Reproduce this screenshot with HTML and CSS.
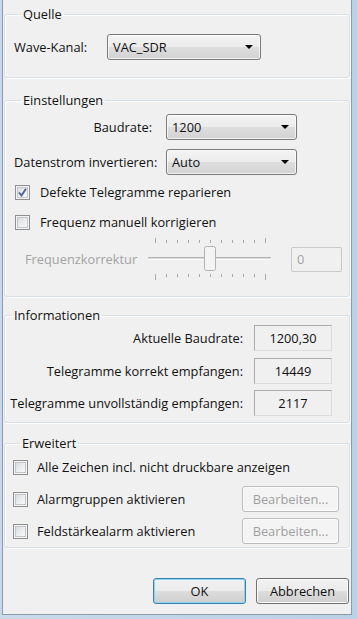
FILE: index.html
```html
<!DOCTYPE html>
<html lang="de">
<head>
    <meta charset="UTF-8">
    <title>Einstellungen</title>
    <link rel="stylesheet" href="styles.css">
</head>
<body>
<div class="window">
  <div class="client">

    <fieldset class="group group-source">
      <legend>Quelle</legend>
      <div class="source-row">
        <label class="source-label">Wave-Kanal:</label>
        <div class="combo combo-source">VAC_SDR<span class="arrow"></span></div>
      </div>
    </fieldset>

    <fieldset class="group group-settings">
      <legend>Einstellungen</legend>
      <div class="settings-grid">
        <label class="right">Baudrate:</label>
        <div class="combo">1200<span class="arrow"></span></div>
        <label class="right">Datenstrom invertieren:</label>
        <div class="combo">Auto<span class="arrow"></span></div>
      </div>
      <div class="check-row first">
        <span class="check">
          <svg width="9" height="9" viewBox="0 0 9 9"><path d="M1 4.5 L3.5 7.5 L8 0.8" fill="none" stroke="#4a5c9a" stroke-width="1.8"/></svg>
        </span>
        <span>Defekte Telegramme reparieren</span>
      </div>
      <div class="check-row second">
        <span class="check"></span>
        <span>Frequenz manuell korrigieren</span>
      </div>
      <div class="slider-row">
        <span class="slider-label">Frequenzkorrektur</span>
        <svg class="slider" width="124" height="42" viewBox="0 0 124 42">
          <g stroke="#a9a9a9" stroke-width="1">
            <line x1="7.5" y1="0" x2="7.5" y2="5"/>
            <line x1="18.5" y1="2" x2="18.5" y2="5"/>
            <line x1="29.5" y1="2" x2="29.5" y2="5"/>
            <line x1="40.5" y1="2" x2="40.5" y2="5"/>
            <line x1="51.5" y1="2" x2="51.5" y2="5"/>
            <line x1="62.5" y1="2" x2="62.5" y2="5"/>
            <line x1="73.5" y1="2" x2="73.5" y2="5"/>
            <line x1="84.5" y1="2" x2="84.5" y2="5"/>
            <line x1="95.5" y1="2" x2="95.5" y2="5"/>
            <line x1="106.5" y1="2" x2="106.5" y2="5"/>
            <line x1="117.5" y1="0" x2="117.5" y2="5"/>
            <line x1="7.5" y1="36" x2="7.5" y2="42"/>
            <line x1="18.5" y1="36" x2="18.5" y2="39"/>
            <line x1="29.5" y1="36" x2="29.5" y2="39"/>
            <line x1="40.5" y1="36" x2="40.5" y2="39"/>
            <line x1="51.5" y1="36" x2="51.5" y2="39"/>
            <line x1="62.5" y1="36" x2="62.5" y2="39"/>
            <line x1="73.5" y1="36" x2="73.5" y2="39"/>
            <line x1="84.5" y1="36" x2="84.5" y2="39"/>
            <line x1="95.5" y1="36" x2="95.5" y2="39"/>
            <line x1="106.5" y1="36" x2="106.5" y2="39"/>
            <line x1="117.5" y1="36" x2="117.5" y2="42"/>
          </g>
          <line x1="0" y1="19.5" x2="123" y2="19.5" stroke="#b4b4b4"/>
          <line x1="0" y1="20.5" x2="123" y2="20.5" stroke="#dadada"/>
          <line x1="0" y1="21.5" x2="123" y2="21.5" stroke="#ffffff"/>
          <rect x="56.5" y="8.5" width="11" height="24" rx="2" fill="#f4f4f4" stroke="#b2b2b2"/>
        </svg>
        <div class="edit-box">0</div>
      </div>
    </fieldset>

    <fieldset class="group group-info">
      <legend>Informationen</legend>
      <div class="info-grid">
        <label class="right">Aktuelle Baudrate:</label>
        <div class="value">1200,30</div>
        <label class="right">Telegramme korrekt empfangen:</label>
        <div class="value">14449</div>
        <label class="right">Telegramme unvollständig empfangen:</label>
        <div class="value">2117</div>
      </div>
    </fieldset>

    <fieldset class="group group-extra">
      <legend>Erweitert</legend>
      <div class="extra-row">
        <div class="check-line"><span class="check"></span><span>Alle Zeichen incl. nicht druckbare anzeigen</span></div>
      </div>
      <div class="extra-row tall">
        <div class="check-line"><span class="check"></span><span>Alarmgruppen aktivieren</span></div>
        <button class="btn btn-edit" disabled>Bearbeiten...</button>
      </div>
      <div class="extra-row tall last">
        <div class="check-line"><span class="check"></span><span>Feldstärkealarm aktivieren</span></div>
        <button class="btn btn-edit" disabled>Bearbeiten...</button>
      </div>
    </fieldset>

    <div class="actions">
      <button class="btn btn-default">OK</button>
      <button class="btn">Abbrechen</button>
    </div>

  </div>
</div>
</body>
</html>
```

FILE: styles.css
```css
* {
  box-sizing: border-box;
}

body {
  margin: 0;
  background: #c4d6eb;
  font-family: "Open Sans", "Liberation Sans", sans-serif;
  font-size: 12.8px;
  color: #111;
}

.window {
  width: 357px;
  height: 619px;
  display: flex;
  padding: 0 5px 4px 2px;
  background: linear-gradient(90deg, #c9d9ea, #bcd0e6);
}

.client {
  flex: 1;
  display: flex;
  flex-direction: column;
  background: #f0f0f0;
  border: 1px solid #8c9aab;
  border-top: none;
  padding: 0 1px;
}

/* group boxes */
.group {
  margin: 0;
  padding: 0;
  min-width: 0;
  border: 1px solid #d5dfe5;
  border-radius: 3px;
  box-shadow: inset 1px 1px 0 #fff, 1px 1px 0 #fff;
}

.group legend {
  margin-left: 7px;
  padding: 0 2px;
  line-height: 16px;
}

.group-source { margin-top: 6px; padding: 12px 0 17px 9px; }
.group-settings { margin-top: 14px; padding: 6px 0 16px 9px; }
.group-info { margin-top: 10px; padding: 2px 0 6px 0; }
.group-extra { margin-top: 12px; padding: 8px 10px 3px 8px; }

.right {
  text-align: right;
  white-space: nowrap;
}

/* combo boxes */
.combo {
  position: relative;
  height: 26px;
  line-height: 24px;
  padding-left: 5px;
  border: 1px solid #7a7a7a;
  border-radius: 3px;
  background: linear-gradient(#f3f3f3 0%, #ececec 50%, #dedede 51%, #d2d2d2 100%);
  box-shadow: inset 0 0 0 1px rgba(255,255,255,0.7);
}

.combo .arrow {
  position: absolute;
  right: 7px;
  top: 10px;
  width: 0;
  height: 0;
  border-left: 4px solid transparent;
  border-right: 4px solid transparent;
  border-top: 4px solid #000;
}

.source-row {
  display: flex;
  align-items: center;
}

.source-label {
  width: 93px;
  white-space: nowrap;
}

.combo-source {
  width: 154px;
}

.settings-grid {
  display: grid;
  grid-template-columns: 138px 131px;
  column-gap: 14px;
  row-gap: 9px;
  align-items: center;
}

/* check boxes */
.check {
  width: 15px;
  height: 15px;
  flex: none;
  display: flex;
  align-items: center;
  justify-content: center;
  border: 1px solid #8e8f8f;
  background: linear-gradient(135deg, #d3d6da 0%, #eef0f1 60%, #fafafa 100%);
  box-shadow: inset 0 0 0 1px #f4f4f4, inset 0 0 0 2px #c3c7cc;
}

.check-row {
  display: flex;
  align-items: center;
  gap: 10px;
  height: 16px;
  padding-left: 1px;
  white-space: nowrap;
}

.check-row.first { margin-top: 9px; }
.check-row.second { margin-top: 14px; }

/* disabled slider row */
.slider-row {
  display: flex;
  align-items: center;
  height: 42px;
  margin-top: 8px;
  color: #a3a3a3;
}

.slider-label {
  width: 134px;
  padding-left: 11px;
  white-space: nowrap;
}

.slider {
  display: block;
  flex: none;
}

.edit-box {
  width: 51px;
  height: 25px;
  margin-left: 19px;
  line-height: 23px;
  padding-left: 5px;
  border: 1px solid #c8c8c8;
  border-radius: 2px;
}

/* information */
.info-grid {
  display: grid;
  grid-template-columns: 238px 78px;
  column-gap: 11px;
  row-gap: 6.5px;
  align-items: center;
}

.value {
  height: 26px;
  line-height: 24px;
  text-align: center;
  border: 1px solid;
  border-color: #acacac #dcdcdc #dcdcdc #acacac;
}

/* advanced */
.extra-row {
  display: flex;
  align-items: center;
  justify-content: space-between;
  height: 16px;
}

.extra-row.tall {
  height: 26px;
  margin-top: 11px;
}

.extra-row.last {
  margin-top: 6px;
}

.check-line {
  display: flex;
  align-items: center;
  gap: 9px;
  white-space: nowrap;
}

/* buttons */
.btn {
  height: 26px;
  padding: 0;
  font: inherit;
  color: #111;
  border: 1px solid #707070;
  border-radius: 3px;
  background: linear-gradient(#f2f2f2 0%, #ebebeb 50%, #dddddd 51%, #cfcfcf 100%);
  box-shadow: inset 0 0 0 1px #fcfcfc;
}

.btn-edit {
  width: 97px;
  color: #a0a0a0;
  border-color: #b9bdc0;
  background: #f4f4f4;
  box-shadow: inset 0 0 0 1px #fbfbfb;
}

.actions {
  margin-top: auto;
  display: flex;
  justify-content: flex-end;
  gap: 10px;
  padding: 0 1px 10px 0;
}

.actions .btn {
  width: 93px;
}

.btn-default {
  border-color: #3c7fb1;
  box-shadow: inset 0 0 0 1px #8fd3f2;
}
```
